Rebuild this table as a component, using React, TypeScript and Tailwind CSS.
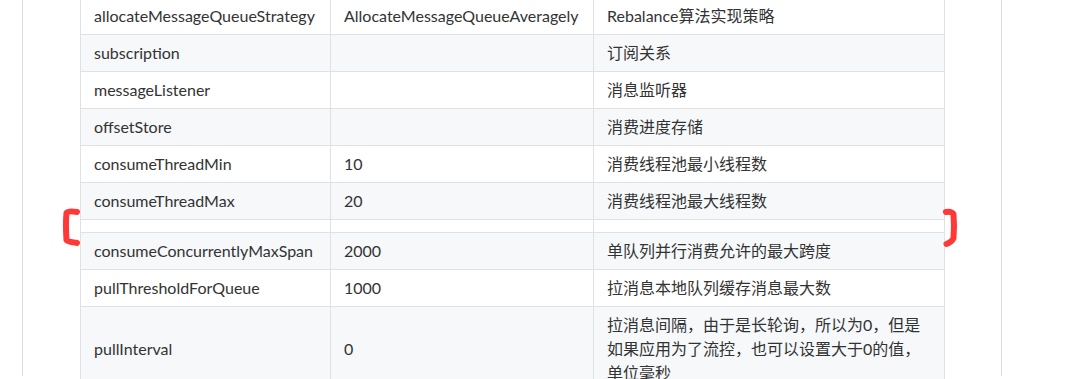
import React from "react";

const rows: [string, string, string][] = [
  ["allocateMessageQueueStrategy", "AllocateMessageQueueAveragely", "Rebalance算法实现策略"],
  ["subscription", "", "订阅关系"],
  ["messageListener", "", "消息监听器"],
  ["offsetStore", "", "消费进度存储"],
  ["consumeThreadMin", "10", "消费线程池最小线程数"],
  ["consumeThreadMax", "20", "消费线程池最大线程数"],
  ["", "", ""],
  ["consumeConcurrentlyMaxSpan", "2000", "单队列并行消费允许的最大跨度"],
  ["pullThresholdForQueue", "1000", "拉消息本地队列缓存消息最大数"],
  ["pullInterval", "0", "拉消息间隔，由于是长轮询，所以为0，但是如果应用为了流控，也可以设置大于0的值，单位毫秒"],
];

export default function App() {
  return (
    <div className="relative h-[379px] w-[1078px] overflow-hidden bg-white">
      <div className="ml-[22px] h-full w-[980px] border-x border-[#dcdcdc] pl-[57px]">
        <table
          className="-mt-[3px] table-fixed border-collapse text-[16px] leading-6 text-[#333]"
          style={{ fontFamily: "Lato, 'Noto Sans CJK SC', sans-serif" }}
        >
          <colgroup>
            <col className="w-[250px]" />
            <col className="w-[263px]" />
            <col className="w-[351px]" />
          </colgroup>
          <tbody>
            {rows.map((r, i) => (
              <tr key={i} className={i % 2 === 1 ? "bg-[#f6f8fa]" : "bg-white"}>
                {r.map((c, j) => (
                  <td key={j} className="border border-[#dfe2e5] px-[13px] py-[6px] align-middle">
                    {c}
                  </td>
                ))}
              </tr>
            ))}
          </tbody>
        </table>
      </div>
      <svg className="absolute left-[60px] top-[206px]" width="22" height="42" viewBox="0 0 22 42">
        <path d="M17 6 C12 5 8 5 6.5 7 C6 12 6 26 6.5 34 C8 36 12 36 17 37" fill="none" stroke="#ff3838" strokeWidth="6" strokeLinecap="round" strokeLinejoin="round" />
      </svg>
      <svg className="absolute left-[940px] top-[206px]" width="22" height="44" viewBox="0 0 22 44">
        <path d="M6 6 C10 5 12 6 13.5 8 C14 14 14 26 13.5 32 C12.5 35 9 37 6.5 38" fill="none" stroke="#ff3838" strokeWidth="6" strokeLinecap="round" strokeLinejoin="round" />
      </svg>
    </div>
  );
}
